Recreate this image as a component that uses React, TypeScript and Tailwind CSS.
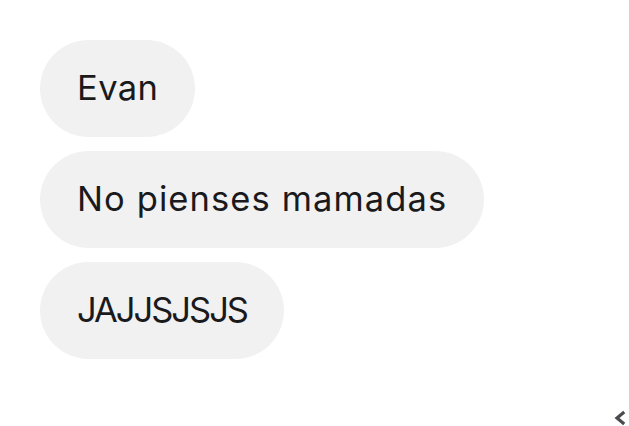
const MESSAGES = [
  { text: "Evan", track: "tracking-[0.4px]" },
  { text: "No pienses mamadas", track: "tracking-[1.1px]" },
  { text: "JAJJSJSJS", track: "tracking-[-2px]" },
];

export default function App() {
  return (
    <div
      className="relative w-[629px] h-[426px] overflow-hidden bg-white"
      style={{ fontFamily: "Inter, 'Noto Sans', sans-serif" }}
    >
      <div className="flex flex-col items-start gap-[14px] pt-[40px] pl-[40px]">
        {MESSAGES.map((m) => (
          <div
            key={m.text}
            className={`h-[97px] flex items-center pl-[37px] pr-[37px] rounded-full bg-[#f1f1f2] text-[#1a1a1c] text-[34.5px] leading-none ${m.track}`}
          >
            {m.text}
          </div>
        ))}
      </div>

      {/* scroll arrow peeking in the corner */}
      <svg
        className="absolute left-[613px] top-[410px]"
        width="16"
        height="16"
        viewBox="0 0 16 16"
      >
        <path
          d="M10 3 L4 8 L10 13"
          fill="none"
          stroke="#4b4b4f"
          strokeWidth="3.2"
          strokeLinecap="square"
        />
      </svg>
    </div>
  );
}
